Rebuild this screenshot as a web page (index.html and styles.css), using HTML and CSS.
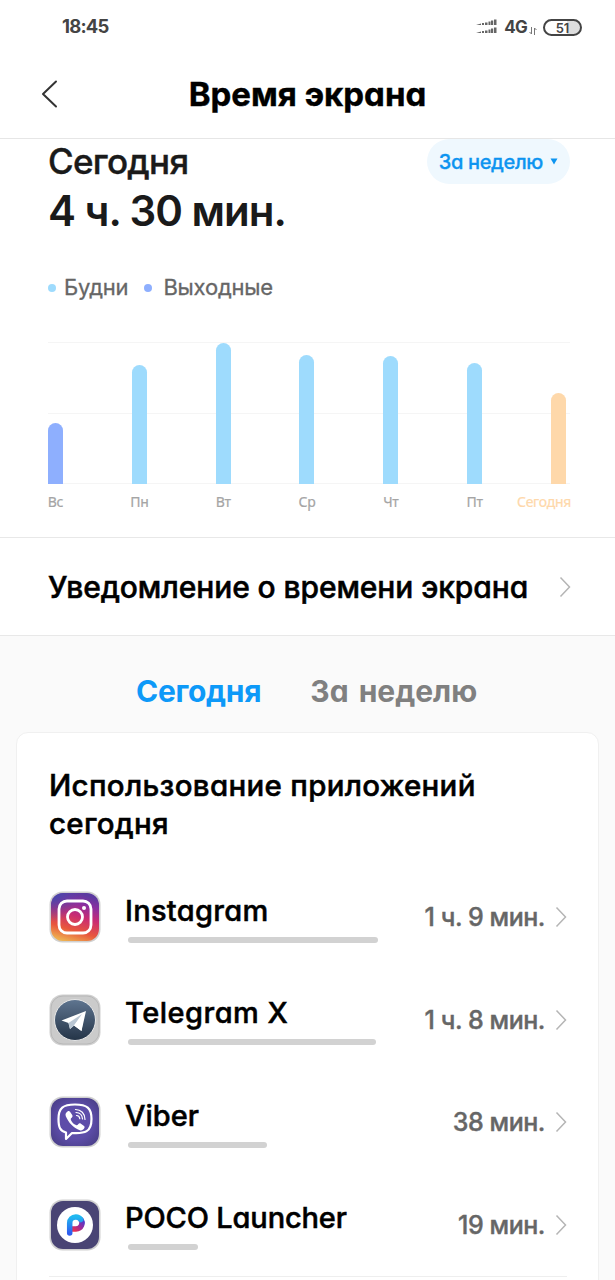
FILE: index.html
```html
<!DOCTYPE html>
<html lang="ru">
  <head>
    <meta charset="utf-8">
    <title>Время экрана</title>
    <link rel="stylesheet" href="styles.css">
  </head>
  <body>
    <div class="statusbar">
      <span class="clock">18:45</span>
      <div class="status-icons">
        <svg class="signal" width="21" height="16" viewBox="0 0 21 16" fill="#666">
          <path d="M0 6l5-1.500V6zM6 4h2v2H6zM9 3.500h2.500V6H9zM12.500 2.500h2V6h-2zM15 1.500h2.200V6H15zM18 .5h2.500V6H18z"/>
          <path d="M0 14l5-1.500V14zM6 12h2v2H6zM9 11.500h2.500V14H9zM12.500 10.500h2V14h-2zM15 9.500h2.200V14H15zM18 8.500h2.500V14H18z"/>
        </svg>
        <span class="network">4G</span>
        <svg class="data" width="8" height="8" viewBox="0 0 8 8" fill="none" stroke="#777" stroke-width="1">
          <path d="M2.500 0v7M.5 5l2 2M5.500 8V1M5.500 1l2 2"/>
        </svg>
        <span class="battery">51</span>
      </div>
    </div>

    <header class="header">
      <svg class="back" width="17" height="28" viewBox="0 0 17 28" fill="none" stroke="#333" stroke-width="2" stroke-linecap="round" stroke-linejoin="round">
        <path d="M15 1.500L2 14l13 12.500"/>
      </svg>
      <h1>Время экрана</h1>
    </header>

    <section class="summary">
      <div class="summary-top">
        <div>
          <div class="day">Сегодня</div>
          <div class="total">4 ч. 30 мин.</div>
        </div>
        <button class="period">
          <span>За неделю</span>
          <svg width="8" height="7" viewBox="0 0 8 7" fill="#0d94f0"><path d="M.5.5h7L4 6.500z"/></svg>
        </button>
      </div>
      <div class="legend">
        <span class="dot"></span><span class="weekdays">Будни</span>
        <span class="dot weekend"></span><span class="weekends">Выходные</span>
      </div>
      <div class="chart">
        <div class="col"><div class="bar weekend" style="height:61px"></div><span>Вс</span></div>
        <div class="col"><div class="bar" style="height:119px"></div><span>Пн</span></div>
        <div class="col"><div class="bar" style="height:141px"></div><span>Вт</span></div>
        <div class="col"><div class="bar" style="height:129px"></div><span>Ср</span></div>
        <div class="col"><div class="bar" style="height:128px"></div><span>Чт</span></div>
        <div class="col"><div class="bar" style="height:121px"></div><span>Пт</span></div>
        <div class="col today"><div class="bar" style="height:91px"></div><span>Сегодня</span></div>
      </div>
    </section>

    <a class="notice">
      <span>Уведомление о времени экрана</span>
      <svg class="arrow" width="12" height="22" viewBox="0 0 12 22"><path d="M1.500 1.500L10.500 11l-9 9.500"/></svg>
    </a>

    <nav class="tabs">
      <a class="tab tab-active">Сегодня</a>
      <a class="tab tab-week">За неделю</a>
    </nav>

    <section class="card">
      <h2>Использование приложений сегодня</h2>

      <div class="app">
        <svg class="icon" width="52" height="52" viewBox="0 0 52 52">
          <defs>
            <linearGradient id="ig" x1=".3" y1="1" x2=".6" y2="0">
              <stop offset="0" stop-color="#eeb050"/>
              <stop offset=".25" stop-color="#e8573c"/>
              <stop offset=".55" stop-color="#c92b73"/>
              <stop offset=".8" stop-color="#8a2fa0"/>
              <stop offset="1" stop-color="#5b3aa0"/>
            </linearGradient>
            <radialGradient id="igb" cx="0" cy="0" r=".6">
              <stop offset="0" stop-color="#3a4cae"/>
              <stop offset="1" stop-color="#3a4cae" stop-opacity="0"/>
            </radialGradient>
          </defs>
          <rect class="rim" x=".5" y=".5" width="51" height="51" rx="13"/>
          <rect x="2" y="2" width="48" height="48" rx="12" fill="url(#ig)"/>
          <rect x="2" y="2" width="48" height="48" rx="12" fill="url(#igb)"/>
          <g fill="none" stroke="#fff" stroke-width="2.800">
            <rect x="10" y="10" width="32" height="32" rx="8"/>
            <circle cx="26" cy="26" r="7.500"/>
          </g>
          <circle cx="35" cy="17" r="2" fill="#fff"/>
        </svg>
        <div class="info">
          <div class="name n1">Instagram</div>
          <div class="usage" style="width:250px"></div>
        </div>
        <span class="time">1 ч. 9 мин.</span>
        <svg class="arrow" width="12" height="22" viewBox="0 0 12 22"><path d="M1.500 1.500L10.500 11l-9 9.500"/></svg>
      </div>

      <div class="app">
        <svg class="icon" width="52" height="52" viewBox="0 0 52 52">
          <defs>
            <linearGradient id="tg" x1="0" y1="0" x2="0" y2="1">
              <stop offset="0" stop-color="#5f7590"/>
              <stop offset="1" stop-color="#243447"/>
            </linearGradient>
          </defs>
          <rect class="rim" x=".5" y=".5" width="51" height="51" rx="13"/>
          <rect x="2" y="2" width="48" height="48" rx="12" fill="#cbcbcb" stroke="#b8b8b8"/>
          <circle cx="26" cy="26" r="20.500" fill="url(#tg)" stroke="#e8e8e8"/>
          <path d="M12.500 26.500L37 17l-4.500 20-7.500-5.500-4 3.500-1.500-6z" fill="#fff"/>
          <path d="M19.500 29L33 20l-8 11.500-4 3.500z" fill="#b9c6d3"/>
          <path d="M25 31.500L35 19l-2.500 18z" fill="#fff"/>
        </svg>
        <div class="info">
          <div class="name n2">Telegram X</div>
          <div class="usage" style="width:248px"></div>
        </div>
        <span class="time">1 ч. 8 мин.</span>
        <svg class="arrow" width="12" height="22" viewBox="0 0 12 22"><path d="M1.500 1.500L10.500 11l-9 9.500"/></svg>
      </div>

      <div class="app">
        <svg class="icon" width="52" height="52" viewBox="0 0 52 52">
          <defs>
            <radialGradient id="vb" r=".7">
              <stop offset=".5" stop-color="#5d4da9"/>
              <stop offset="1" stop-color="#453b80"/>
            </radialGradient>
          </defs>
          <rect class="rim" x=".5" y=".5" width="51" height="51" rx="13"/>
          <rect x="2" y="2" width="48" height="48" rx="12" fill="url(#vb)"/>
          <path d="M26 8.500c-12 0-16.500 3.500-16.500 14.500 0 8 1.500 12 7.500 13.500v6.500l6-6c13 .8 19.500-1 19.500-14C42.500 12 38 8.500 26 8.500z" fill="none" stroke="#fff" stroke-width="2.200" stroke-linejoin="round"/>
          <path d="M18.500 15.500c1-.8 2-.5 2.700.6l2 3c.6 1 .4 1.900-.5 2.600-1 .8-1.200 1.300-.7 2.500 1 2.300 2.800 4 5 4.800 1 .4 1.500.1 2.200-.8.8-1 1.700-1.100 2.700-.5l2.800 2c1 .7 1.200 1.500.5 2.500-1.200 1.700-2.500 2.700-4.400 2-6.200-2.400-11.300-7.500-14-14-.7-1.900 0-3.500 1.700-4.700z" fill="#fff"/>
          <g fill="none" stroke="#fff" stroke-width="1.200" stroke-linecap="round">
            <path d="M26.500 13.500c5.500 0 9.500 4 9.500 10M27 16.500c4 .2 6.300 2.700 6.500 6.500M27.500 19.500c2 .1 3.200 1.300 3.300 3.200"/>
          </g>
        </svg>
        <div class="info">
          <div class="name n3">Viber</div>
          <div class="usage" style="width:139px"></div>
        </div>
        <span class="time">38 мин.</span>
        <svg class="arrow" width="12" height="22" viewBox="0 0 12 22"><path d="M1.500 1.500L10.500 11l-9 9.500"/></svg>
      </div>

      <div class="app">
        <svg class="icon" width="52" height="52" viewBox="0 0 52 52">
          <defs>
            <linearGradient id="pc" x1="0" y1="0" x2="0" y2="1">
              <stop offset="0" stop-color="#20b8f0"/>
              <stop offset="1" stop-color="#2f5df0"/>
            </linearGradient>
            <linearGradient id="pr" x1="1" y1="0" x2="0" y2="1">
              <stop offset="0" stop-color="#4a3bd0"/>
              <stop offset=".5" stop-color="#a02a98"/>
              <stop offset="1" stop-color="#f0304c"/>
            </linearGradient>
          </defs>
          <rect class="rim" x=".5" y=".5" width="51" height="51" rx="13"/>
          <rect x="2" y="2" width="48" height="48" rx="12" fill="#494474"/>
          <circle cx="26" cy="26" r="18" fill="#fff"/>
          <g fill="none" stroke-width="5.500">
            <path d="M22.500 30h4.500a6 6 0 0 0 4.500-10" stroke="url(#pr)"/>
            <path d="M20.700 34V24a6 6 0 0 1 6-6 6 6 0 0 1 5 2.500" stroke="url(#pc)" stroke-linecap="round"/>
          </g>
        </svg>
        <div class="info">
          <div class="name n4">POCO Launcher</div>
          <div class="usage" style="width:70px"></div>
        </div>
        <span class="time">19 мин.</span>
        <svg class="arrow" width="12" height="22" viewBox="0 0 12 22"><path d="M1.500 1.500L10.500 11l-9 9.500"/></svg>
      </div>
      <div class="divider"></div>
    </section>
  </body>
</html>
```
FILE: styles.css
```css
*{
  box-sizing: border-box;
}
body{
  margin: 0;
  height: 1280px;
  overflow: hidden;
  background: #fff;
  color: #000;
  font-family: Inter, "Noto Sans", sans-serif;
  font-feature-settings: "cv11", "ss03";
  white-space: nowrap;
}
svg{
  display: block;
  flex: none;
}
/*status bar*/
.statusbar{
  display: flex;
  justify-content: space-between;
  align-items: center;
  height: 54px;
  padding: 0 33px 0 62px;
  color: #444;
}
.clock{
  padding-bottom: 2px;
  font-size: 18.5px;
  font-weight: 700;
  letter-spacing: -0.8px;
}
.status-icons{
  display: flex;
  align-items: center;
}
.network{
  margin-left: 7px;
  font-size: 17px;
  font-weight: 700;
  letter-spacing: -0.7px;
}
.data{
  margin: 7px 6px 0 2px;
}
.battery{
  width: 39px;
  height: 17px;
  border: 2px solid #444;
  border-radius: 9px;
  background: linear-gradient(90deg, #fff 62%, #ddd 62%);
  font-size: 13px;
  font-weight: 600;
  line-height: 14px;
  text-align: center;
}
/*title*/
.header{
  display: flex;
  align-items: center;
  height: 85px;
  padding: 0 41px 4px;
  border-bottom: 1px solid #e6e6e6;
}
.header h1{
  flex: 1;
  margin: 0 17px 0 0;
  font-size: 33px;
  font-weight: 700;
  text-align: center;
  -webkit-text-stroke: 0.4px;
}
/*summary*/
.summary{
  height: 399px;
  padding: 0 45px 0 48px;
  border-bottom: 1px solid #e8e8e8;
}
.summary-top{
  display: flex;
  justify-content: space-between;
  align-items: flex-start;
  height: 132px;
  color: #1a1a1a;
}
.day{
  font-size: 35px;
  font-weight: 500;
  line-height: 44px;
  letter-spacing: -0.7px;
  -webkit-text-stroke: 0.4px;
}
.total{
  font-size: 42px;
  font-weight: 600;
  line-height: 56px;
  letter-spacing: -1px;
}
.period{
  display: flex;
  align-items: center;
  gap: 7px;
  height: 45px;
  padding: 0 12px;
  border: 0;
  border-radius: 23px;
  background: #eff8fe;
  color: #0d94f0;
  font: inherit;
  font-size: 20px;
  font-weight: 500;
  letter-spacing: -0.35px;
  -webkit-text-stroke: 0.3px;
}
.legend{
  display: flex;
  align-items: center;
  height: 32px;
  color: #666;
  font-size: 22px;
  letter-spacing: -0.2px;
  -webkit-text-stroke: 0.3px;
}
.dot{
  width: 8px;
  height: 8px;
  margin: 2px 8px 0 0;
  border-radius: 50%;
  background: #9edbfd;
}
.dot.weekend{
  margin: 2px 11px 0 16px;
  background: #8eaffe;
}
/*weekly chart*/
.chart{
  display: flex;
  justify-content: space-between;
  align-items: flex-end;
  width: 522px;
  height: 142px;
  margin-top: 39px;
  padding-right: 4px;
  border-top: 1px solid #f5f5f5;
  border-bottom: 1px solid #f5f5f5;
  background: linear-gradient(#f5f5f5, #f5f5f5) 0 70px / 100% 1px no-repeat;
}
.col{
  display: flex;
  flex-direction: column;
  align-items: center;
  width: 15px;
  margin-bottom: -27px;
}
.bar{
  width: 15px;
  border-radius: 7.5px 7.5px 0 0;
  background: #9edbfd;
}
.bar.weekend{
  background: #8eaffe;
}
.col span{
  height: 26px;
  color: #a5a5a5;
  font-family: "Noto Sans", sans-serif;
  font-size: 14px;
  line-height: 35px;
  letter-spacing: -0.3px;
  -webkit-text-stroke: 0.2px;
}
.today .bar{
  background: #fed8aa;
}
.today{
  align-items: flex-end;
}
.today span{
  margin-right: -5px;
  color: #fed8aa;
}
.notice{
  display: flex;
  justify-content: space-between;
  align-items: center;
  height: 98px;
  padding: 0 44px 0 48px;
  border-bottom: 1px solid #e8e8e8;
  font-size: 30px;
  font-weight: 500;
  letter-spacing: -0.1px;
  -webkit-text-stroke: 0.5px;
}
.arrow{
  fill: none;
  stroke: #b5b5b5;
  stroke-width: 1.5;
}
/*apps*/
.tabs{
  display: flex;
  gap: 49px;
  height: 96px;
  padding-left: 136px;
  line-height: 111px;
  background: #fafafa;
  font-size: 30px;
  font-weight: 700;
}
.tab{
  color: #808080;
}
.tab-week{
  word-spacing: 3px;
}
.tab-active{
  color: #0d99f8;
  letter-spacing: -0.3px;
}
.card{
  height: 560px;
  padding: 33px 31px 0 32px;
  border: 1px solid #f0f0f0;
  border-radius: 12px;
  background: #fff;
  box-shadow: 0 0 0 40px #fafafa;
  margin: 0 16px;
}
.card h2{
  height: 100px;
  margin: 0;
  font-size: 29.5px;
  font-weight: 500;
  line-height: 38px;
  letter-spacing: 0.3px;
  white-space: normal;
  -webkit-text-stroke: 0.5px;
}
.app{
  display: flex;
  align-items: center;
  height: 102.5px;
}
.rim{
  fill: #d0d0d0;
}
.info{
  flex: 1;
  margin-left: 24px;
}
.name{
  font-size: 29px;
  font-weight: 500;
  line-height: 38px;
  -webkit-text-stroke: 0.5px;
}
.n1{
  letter-spacing: 0.3px;
}
.n2{
  letter-spacing: 0.5px;
}
.n4{
  letter-spacing: -0.15px;
}
.usage{
  height: 6px;
  margin: 7px 0 0 3px;
  border-radius: 3px;
  background: #d2d2d2;
}
.time{
  margin-right: 10px;
  color: #666;
  font-size: 25px;
  font-weight: 500;
  letter-spacing: -0.45px;
  -webkit-text-stroke: 0.4px;
}
.divider{
  height: 1px;
  background: #eee;
}
```
